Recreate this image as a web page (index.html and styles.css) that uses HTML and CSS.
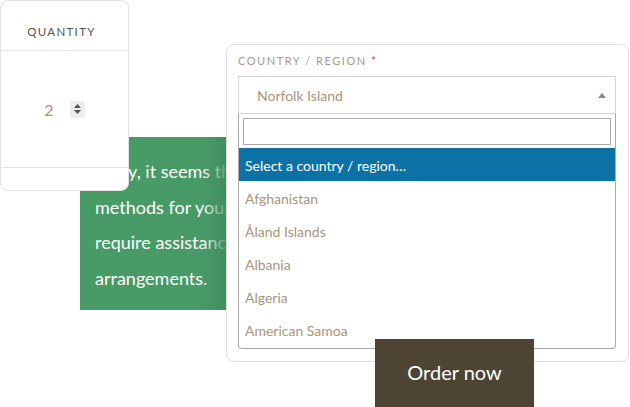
FILE: index.html
```html
<!DOCTYPE html>
<html>
<head>
<meta charset="utf-8">
<link rel="stylesheet" href="styles.css">
</head>
<body>
<div class="canvas">
  <div class="notice">
    <p class="notice-text">Sorry, it seems that there are no available payment<br>methods for your state. Please contact us if you<br>require assistance or wish to make alternate<br>arrangements.</p>
  </div>

  <div class="qty-card">
    <div class="qty-head">QUANTITY</div>
    <div class="qty-body">
      <span class="qty-num">2</span>
      <span class="spinner">
        <svg width="9" height="12" viewBox="0 0 9 12"><path d="M4.5 1 L8 5 L1 5 Z" fill="#555"/><path d="M1 7 L8 7 L4.5 11 Z" fill="#555"/></svg>
      </span>
    </div>
    <div class="qty-foot"></div>
  </div>

  <div class="country-card">
    <div class="field-label">COUNTRY / REGION <span class="req">*</span></div>
    <div class="select">
      <span class="select-value">Norfolk Island</span>
      <svg class="select-arrow" width="8" height="5" viewBox="0 0 8 5"><path d="M0 5 L4 0 L8 5 Z" fill="#888"/></svg>
    </div>
    <div class="dropdown">
      <div class="search-wrap"><div class="search"></div></div>
      <ul class="options">
        <li class="option active">Select a country / region…</li>
        <li class="option">Afghanistan</li>
        <li class="option">Åland Islands</li>
        <li class="option">Albania</li>
        <li class="option">Algeria</li>
        <li class="option">American Samoa</li>
      </ul>
    </div>
  </div>

  <button class="order-btn">Order now</button>
</div>
</body>
</html>
```

FILE: styles.css
```css
* { box-sizing: border-box; }
html, body { margin: 0; padding: 0; background: #fff; }
body { font-family: Lato, "Open Sans", sans-serif; }

.canvas {
  position: relative;
  width: 630px;
  height: 407px;
  overflow: hidden;
}

/* green notice */
.notice {
  position: absolute;
  left: 80px;
  top: 137px;
  width: 146px;
  height: 173px;
  background: #489a66;
  overflow: hidden;
}
.notice::after {
  content: "";
  position: absolute;
  top: 0;
  right: 0;
  width: 24px;
  height: 100%;
  background: linear-gradient(to right, rgba(72,154,102,0), rgba(66,140,94,0.85));
}
.notice-text {
  margin: 0;
  width: 480px;
  padding: 17px 0 0 15px;
  color: #fff;
  font-size: 18px;
  line-height: 35.5px;
  white-space: nowrap;
}

/* quantity card */
.qty-card {
  position: absolute;
  left: 0;
  top: 0;
  width: 129px;
  height: 191px;
  background: #fff;
  border: 1px solid #e1e1e1;
  border-radius: 8px;
  display: flex;
  flex-direction: column;
}
.qty-head {
  height: 50px;
  border-bottom: 1px solid #e3e3e3;
  display: flex;
  align-items: flex-end;
  justify-content: center;
  padding: 0 6px 12px 0;
  font-size: 11.5px;
  letter-spacing: 1.3px;
  color: #555;
}
.qty-body {
  height: 117px;
  border-bottom: 1px solid #e3e3e3;
  display: flex;
  align-items: center;
  justify-content: center;
  gap: 16px;
}
.qty-num {
  font-size: 16px;
  color: #a8957a;
}
.spinner {
  width: 15px;
  height: 17px;
  background: #eee;
  display: flex;
  align-items: center;
  justify-content: center;
}
.qty-foot { flex: 1; }

/* country card */
.country-card {
  position: absolute;
  left: 226px;
  top: 44px;
  width: 403px;
  height: 318px;
  background: #fff;
  border: 1px solid #dedede;
  border-radius: 8px;
  padding: 9px 12px 0 11px;
}
.field-label {
  font-size: 11px;
  letter-spacing: 1.55px;
  color: #a8998a;
  line-height: 14px;
  height: 22px;
}
.req { color: #e2401c; }
.select {
  height: 38px;
  border: 1px solid #d4d4d4;
  display: flex;
  align-items: center;
  justify-content: space-between;
  padding: 0 9px 0 18px;
}
.select-value {
  font-size: 14px;
  color: #a8957a;
}
.dropdown {
  border: 1px solid #aaa;
  border-top: none;
  border-radius: 0 0 4px 4px;
  height: 235px;
  overflow: hidden;
}
.search-wrap { padding: 4px 4px 3px; }
.search {
  height: 27px;
  border: 1px solid #aaa;
}
.options {
  list-style: none;
  margin: 0;
  padding: 0;
}
.option {
  height: 33px;
  padding: 1px 0 0 6px;
  display: flex;
  align-items: center;
  font-size: 14px;
  color: #a8957a;
}
.option.active {
  background: #0c72a6;
  color: #fff;
}

/* button */
.order-btn {
  position: absolute;
  left: 375px;
  top: 339px;
  width: 159px;
  height: 68px;
  border: none;
  background: #4e4434;
  color: #fff;
  font-family: Lato, sans-serif;
  font-size: 20px;
  padding: 0 0 2px;
}
```
